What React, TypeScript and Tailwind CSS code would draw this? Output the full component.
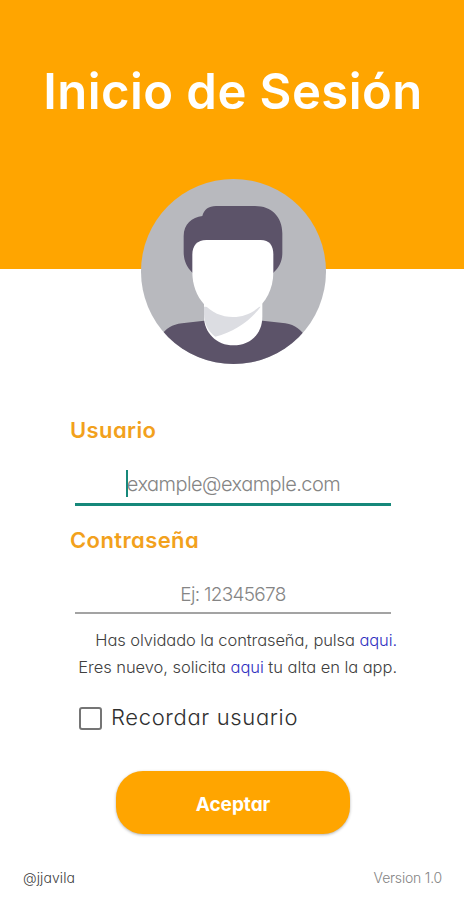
import React, { useState } from 'react';

const Avatar: React.FC = () => (
  <svg viewBox="33 27 555 555" className="h-[185px] w-[185px]" aria-hidden="true">
    <defs>
      <clipPath id="avatar-clip">
        <circle cx="310.5" cy="304.5" r="277.5" />
      </clipPath>
    </defs>
    <g clipPath="url(#avatar-clip)">
      <rect x="33" y="27" width="555" height="555" fill="#b8b9be" />
      {/* shirt */}
      <path d="M90 500C108 476 126 463 156 460L222 452H398L466 460C496 464 514 480 530 505V600H90Z" fill="#5c5369" />
      {/* neck */}
      <path d="M222 400H397V440C397 492 360 526 310 526C260 526 222 488 222 440Z" fill="#fff" />
      <path d="M222 410H392C362 452 312 486 256 500C235 485 222 462 222 432Z" fill="#dcdde2" />
      {/* hair */}
      <path d="M187 308C169 290 161 270 161 246V198C161 163 186 141 217 138C222 119 236 108 258 108H375C425 108 457 141 457 190V248C457 274 448 292 429 309Z" fill="#5c5369" />
      {/* face */}
      <path d="M187 254C187 226 202 210 229 210H392C418 210 430 226 430 254V306C430 384 377 441 309 441C240 441 187 384 187 306Z" fill="#fff" />
    </g>
  </svg>
);

const App: React.FC = () => {
  const [remember, setRemember] = useState(false);

  return (
    <div className="flex h-[900px] w-[464px] flex-col overflow-hidden bg-white font-['Inter','Open_Sans',sans-serif] [font-feature-settings:'cv11']">
      <header className="flex h-[269px] flex-col items-center bg-[#ffa500]">
        <h1 className="mt-[62px] ml-[2px] h-[60px] whitespace-nowrap text-[49px] leading-[60px] font-semibold tracking-[0.45px] text-white">
          Inicio de Sesión
        </h1>
        <div className="mt-[57px] ml-[2px] shrink-0">
          <Avatar />
        </div>
      </header>

      <main className="mt-[146px] flex flex-col">
        <label className="ml-[70px] h-[30px] text-[22px] leading-[30px] font-semibold tracking-[0.4px] text-[#f2a11c]">
          Usuario
        </label>
        <div className="mt-[21px] ml-[75px] flex h-[40px] w-[316px] items-center justify-center border-b-[3px] border-[#16887a] pb-[2px] text-[20px] font-light whitespace-nowrap text-[#858585]">
          <span className="h-[27px] w-[2px] bg-[#16887a]" />
          <span className="-ml-px tracking-[-0.55px]">example@example.com</span>
        </div>

        <label className="mt-[19px] ml-[70px] h-[30px] text-[22px] leading-[30px] font-semibold tracking-[0.4px] text-[#f2a11c]">
          Contraseña
        </label>
        <div className="mt-[21px] ml-[75px] flex h-[38px] w-[316px] items-center justify-center border-b-2 border-[#a3a3a3] pt-[2px] text-[19px] font-light tracking-[-0.7px] whitespace-nowrap text-[#858585]">
          Ej: 12345678
        </div>

        <div className="mt-[13px] mr-[67px] flex flex-col items-end text-[16.5px] leading-[27px] font-light whitespace-nowrap text-[#404040]">
          <p className="tracking-[-0.1px]">
            Has olvidado la contraseña, pulsa <a className="text-[#3030c0]">aqui.</a>
          </p>
          <p className="tracking-[-0.05px]">
            Eres nuevo, solicita <a className="text-[#3030c0]">aqui</a> tu alta en la app.
          </p>
        </div>

        <div className="mt-[22px] ml-[79px] flex h-[28px] items-center text-[22px] font-light text-[#303030]">
          <button
            type="button"
            role="checkbox"
            aria-checked={remember}
            aria-label="Recordar usuario"
            onClick={() => setRemember(!remember)}
            className="mt-[2px] h-[23px] w-[23px] rounded-[3px] border-2 border-[#757575] aria-checked:bg-[#16887a]"
          />
          <span className="ml-[9px] tracking-[0.65px]">Recordar usuario</span>
        </div>

        <button
          type="button"
          className="mt-[40px] ml-[116px] h-[63px] w-[234px] rounded-[27px] bg-[#ffa500] pt-[6px] text-[19px] font-bold text-white shadow-[0_1px_3px_rgba(0,0,0,0.3)]"
        >
          Aceptar
        </button>
      </main>

      <footer className="mt-[34px] flex h-[20px] justify-between pr-[22px] pl-[23px] text-[14px] leading-[20px] font-light">
        <span className="tracking-[0.1px] text-[#404040]">@jjavila</span>
        <span className="tracking-[-0.2px] text-[#858585]">Version 1.0</span>
      </footer>
    </div>
  );
};

export default App;
